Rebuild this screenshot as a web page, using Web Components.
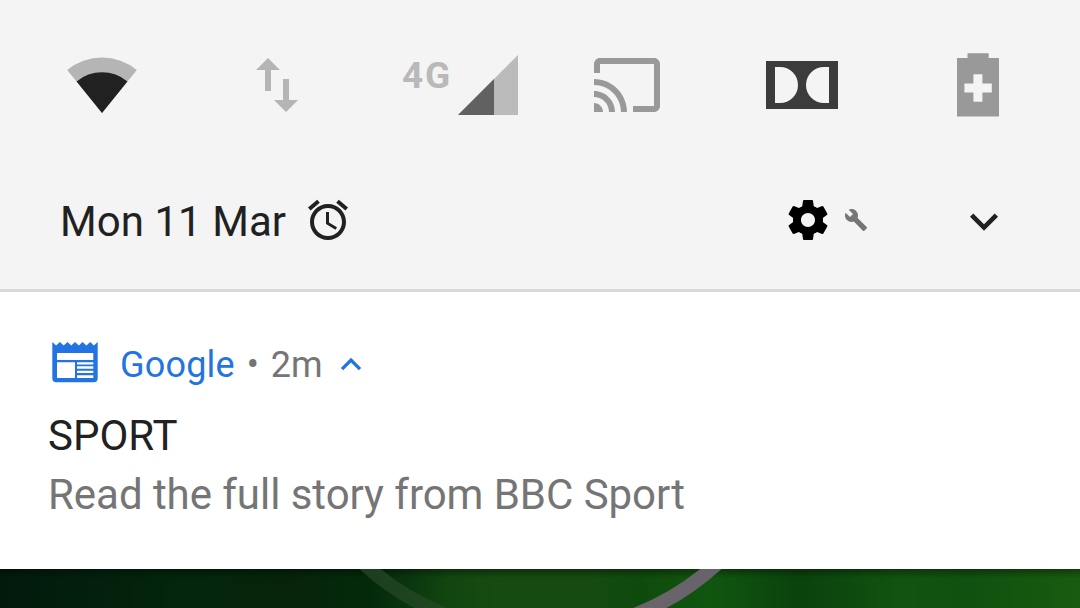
<!DOCTYPE html>
<html lang="en">
<head>
<meta charset="utf-8">
<title>Notification shade</title>
<style>
  body {
    margin: 0;
    width: 1080px;
    height: 608px;
    overflow: hidden;
    font-family: Roboto, sans-serif;
  }
</style>
</head>
<body>
<notification-shade>
  <quick-settings slot="header">
    <quick-tile><shade-icon name="wifi"></shade-icon></quick-tile>
    <quick-tile><shade-icon name="data"></shade-icon></quick-tile>
    <quick-tile><mobile-signal>4G</mobile-signal></quick-tile>
    <quick-tile><shade-icon name="cast"></shade-icon></quick-tile>
    <quick-tile><shade-icon name="dolby"></shade-icon></quick-tile>
    <quick-tile><shade-icon name="battery"></shade-icon></quick-tile>
  </quick-settings>
  <shade-footer slot="header">Mon 11 Mar</shade-footer>
  <notification-card>
    <span slot="app">Google</span>
    <span slot="time">2m</span>
    <span slot="title">SPORT</span>
    <span slot="text">Read the full story from BBC Sport</span>
  </notification-card>
  <shade-wallpaper slot="behind"></shade-wallpaper>
</notification-shade>

<script>
// name: [width, height, viewBox, markup]
const ICONS = {
  wifi: [72, 72, "66 49 72 72", `
    <path fill="#b5b5b5" d="M102 113L67.2 70A55 55 0 0 1 136.8 70z"/>
    <path fill="#212121" d="M102 113L76.6 81.4A39.5 39.5 0 0 1 127.4 81.4z"/>`],
  data: [72, 72, "241 49 72 72", `
    <path fill="#b5b5b5" d="M268 58l12 12h-9v21h-6V70h-9zM283 79h6v21h9l-12 12-12-12h9z"/>`],
  signal: [60, 60, "0 0 60 60", `
    <path fill="#bababa" d="M0 60L60 0v60z"/>
    <path fill="#616161" d="M0 60L36 24v36z"/>`],
  cast: [72, 72, "0 0 24 24", `
    <path fill="#999" d="M21 3H3c-1.1 0-2 .9-2 2v3h2V5h18v14h-7v2h7c1.1 0 2-.9 2-2V5c0-1.1-.9-2-2-2zM1 18v3h3c0-1.66-1.34-3-3-3zm0-4v2c2.76 0 5 2.24 5 5h2c0-3.87-3.13-7-7-7zm0-4v2c4.97 0 9 4.03 9 9h2c0-6.08-4.93-11-11-11z"/>`],
  dolby: [72, 72, "766 49 72 72", `
    <path fill="#3c3c3c" fill-rule="evenodd" d="M766 61h72v48h-72zM775 67v36h5a18 18 0 0 0 0-36zM829 67v36h-5a18 18 0 0 1 0-36z"/>`],
  battery: [72, 72, "941 49 72 72", `
    <path fill="#999" fill-rule="evenodd" d="M967.5 53.3h21.200V58H999v58.600h-42V58h10.500zM973.400 74.200v9.300h-9v9h9v9.300h9v-9.300h9.400v-9h-9.400v-9.300z"/>`],
  alarm: [48, 48, "0 0 24 24", `
    <path fill="#212121" d="M22 5.72l-4.6-3.86-1.29 1.53 4.6 3.86L22 5.72zM7.88 3.39L6.6 1.86 2 5.71l1.29 1.53 4.59-3.85zM12.5 8H11v6l4.75 2.85.75-1.23-4-2.37V8zM12 4c-4.97 0-9 4.03-9 9s4.02 9 9 9c4.97 0 9-4.03 9-9s-4.03-9-9-9zm0 16c-3.87 0-7-3.13-7-7s3.13-7 7-7 7 3.13 7 7-3.13 7-7 7z"/>`],
  gear: [48, 48, "0 0 24 24", `
    <path fill="#000" d="M19.43 12.98c.04-.32.07-.64.07-.98s-.03-.66-.07-.98l2.11-1.65c.19-.15.24-.42.12-.64l-2-3.46c-.12-.22-.39-.3-.61-.22l-2.49 1c-.52-.4-1.08-.73-1.69-.98l-.38-2.65C14.46 2.18 14.25 2 14 2h-4c-.25 0-.46.18-.49.42l-.38 2.65c-.61.25-1.17.59-1.69.98l-2.49-1c-.23-.09-.49 0-.61.22l-2 3.46c-.13.22-.07.49.12.64l2.11 1.65c-.04.32-.07.65-.07.98s.03.66.07.98l-2.11 1.65c-.19.15-.24.42-.12.64l2 3.46c.12.22.39.3.61.22l2.49-1c.52.4 1.08.73 1.69.98l.38 2.65c.03.24.24.42.49.42h4c.25 0 .46-.18.49-.42l.38-2.65c.61-.25 1.17-.59 1.69-.98l2.49 1c.23.09.49 0 .61-.22l2-3.46c.12-.22.07-.49-.12-.64l-2.11-1.65zM12 15.5c-1.93 0-3.5-1.57-3.5-3.5s1.57-3.5 3.5-3.5 3.5 1.57 3.5 3.5-1.57 3.5-3.5 3.5z"/>`],
  wrench: [24, 24, "0 0 24 24", `
    <path fill="#757575" d="M22.7 19l-9.1-9.1c.9-2.3.4-5-1.5-6.9-2-2-5-2.4-7.4-1.3L9 6 6 9 1.6 4.7C.4 7.1.9 10.1 2.9 12.1c1.9 1.9 4.6 2.4 6.9 1.5l9.1 9.1c.4.4 1 .4 1.4 0l2.3-2.3c.5-.4.5-1.1.1-1.4z"/>`],
  expand: [28, 18, "6 8.4 12 7.71", `
    <path fill="#212121" d="M16.59 8.59L12 13.17 7.41 8.59 6 10l6 6 6-6z"/>`],
  collapse: [22, 14, "-11 -7 22 14", `
    <path fill="none" stroke="#2374e1" stroke-width="3.4" d="M-9 5.1L0 -3.9L9 5.1"/>`],
  news: [46, 41, "52 342 46 41", `
    <path fill="#2374e1" fill-rule="evenodd" d="M52.3 342l3.8 3.6 3.8-3.6 3.8 3.6 3.8-3.6 3.8 3.6 3.7-3.6 3.8 3.6 3.8-3.6 3.8 3.6 3.8-3.6 3.7 3.6 3.8-3.6v36.2a4 4 0 0 1-4 4H56.3a4 4 0 0 1-4-4zM57 353v7h36.3v-7zM57 362.2v15.8h18v-15.8zM77 362.2v2.2h16.3v-2.2zM77 366.3v2.5h16.3v-2.5zM77 370.7v2.4h16.3v-2.4zM77 375.2v2.8h16.3v-2.8z"/>`],
};

const define = (name, style, body) => {
  window.customElements.define(name, class extends HTMLElement {
    constructor() {
      super();
      this.attachShadow({ mode: "open" });
      this.shadowRoot.innerHTML = `<style>${style}</style>${body}`;
    }
  });
};

window.customElements.define("shade-icon", class extends HTMLElement {
  connectedCallback() {
    if (this.shadowRoot)
      return;

    const [width, height, viewBox, markup] = ICONS[this.getAttribute("name")];
    this.attachShadow({ mode: "open" });
    this.shadowRoot.innerHTML = `
      <style>
        :host { display: block; flex: none; }
        svg { display: block; }
      </style>
      <svg width="${width}" height="${height}" viewBox="${viewBox}">${markup}</svg>`;
  }
});

define("notification-shade", `
  :host {
    display: flex;
    flex-direction: column;
    height: 608px;
  }
  header {
    box-sizing: border-box;
    height: 292px;
    padding-top: 49px;
    background: #f4f4f4;
    border-bottom: 3px solid #d8d8d8;
  }`, `
  <header><slot name="header"></slot></header>
  <slot></slot>
  <slot name="behind"></slot>`);

define("quick-settings", `
  :host {
    display: grid;
    grid-template-columns: repeat(6, 175px);
    justify-content: center;
    padding-right: 1px;
    height: 72px;
  }`, `<slot></slot>`);

define("quick-tile", `
  :host {
    display: flex;
    justify-content: center;
  }`, `<slot></slot>`);

define("mobile-signal", `
  :host {
    display: flex;
    width: 116px;
    padding: 6px 0 0 16px;
    justify-content: space-between;
  }
  .label {
    color: #b9b9b9;
    font-size: 37px;
    font-weight: 700;
    line-height: 41px;
    letter-spacing: 1.8px;
  }`, `
  <span class="label"><slot></slot></span>
  <shade-icon name="signal"></shade-icon>`);

define("shade-footer", `
  :host {
    display: flex;
    align-items: center;
    height: 60px;
    margin-top: 69px;
    padding: 0 82px 0 60px;
    color: #212121;
  }
  .date {
    width: 244px;
    padding-top: 4px;
    font-size: 42px;
    line-height: 56px;
    white-space: nowrap;
    letter-spacing: 0.05px;
  }
  .actions {
    display: flex;
    align-items: center;
    margin-left: auto;
  }
  .wrench { margin-left: 12px; }
  .expand { margin: 3px 0 0 102px; }`, `
  <div class="date"><slot></slot></div>
  <shade-icon name="alarm"></shade-icon>
  <div class="actions">
    <shade-icon name="gear"></shade-icon>
    <shade-icon class="wrench" name="wrench"></shade-icon>
    <shade-icon class="expand" name="expand"></shade-icon>
  </div>`);

define("notification-card", `
  :host {
    display: block;
    box-sizing: border-box;
    height: 277px;
    padding: 49px 48px 0;
    background: #fff;
    color: #757575;
    white-space: nowrap;
  }
  .top {
    display: flex;
    align-items: center;
    height: 48px;
    font-size: 36px;
    line-height: 48px;
  }
  .news { margin: 0 22px 5px 4px; }
  .app {
    color: #2374e1;
    letter-spacing: 0.2px;
  }
  .dot { width: 36px; text-align: center; }
  .caret { margin: 0 0 2px 17px; }
  .title {
    margin-top: 18px;
    color: #212121;
    font-size: 42px;
    line-height: 58px;
  }
  .text {
    font-size: 42px;
    line-height: 60px;
    letter-spacing: -0.04px;
  }`, `
  <div class="top">
    <shade-icon class="news" name="news"></shade-icon>
    <span class="app"><slot name="app"></slot></span>
    <span class="dot">•</span>
    <span class="time"><slot name="time"></slot></span>
    <shade-icon class="caret" name="collapse"></shade-icon>
  </div>
  <div class="title"><slot name="title"></slot></div>
  <div class="text"><slot name="text"></slot></div>`);

// The strip of wallpaper below the shade, with the bottom of its ring.
define("shade-wallpaper", `
  :host {
    display: block;
    height: 39px;
    background:
      linear-gradient(rgba(0, 0, 0, .35), rgba(0, 0, 0, 0) 9px),
      linear-gradient(90deg, #021a0c 0, #03260c 190px, #06240a 290px, #03290a 370px,
        #0a370d 410px, #124610 450px, #154b10 500px, #154b10 590px, #0f4a0d 640px, #10560f 710px,
        #0b420d 800px, #11530f 900px, #10510f 970px, #195b10 1080px);
  }
  svg { display: block; }`, `
  <svg width="1080" height="39" viewBox="0 569 1080 39">
    <defs>
      <linearGradient id="ring" gradientUnits="userSpaceOnUse" x1="360" y1="0" x2="720" y2="0">
        <stop offset="0" stop-color="#1c3d1f"/>
        <stop offset=".25" stop-color="#20491f"/>
        <stop offset=".75" stop-color="#6b656b"/>
        <stop offset="1" stop-color="#67616a"/>
      </linearGradient>
    </defs>
    <circle cx="540.4" cy="371.5" r="261" fill="none" stroke="url(#ring)" stroke-width="14"/>
  </svg>`);
</script>
</body>
</html>
